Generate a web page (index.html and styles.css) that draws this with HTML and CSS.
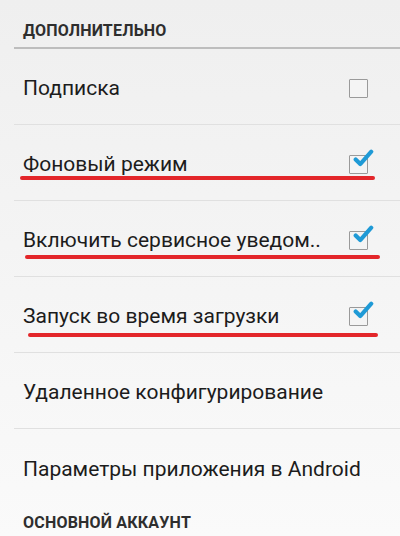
FILE: index.html
```html
<!DOCTYPE html>
<html lang="ru">
<head>
    <meta charset="UTF-8">
    <meta name="viewport" content="width=device-width, initial-scale=1.0">
    <title>Настройки</title>
    <link rel="stylesheet" href="styles.css">
</head>
<body>
    <div class="settings">
        <!-- Категория -->
        <div class="category first">ДОПОЛНИТЕЛЬНО</div>

        <div class="row">
            <span class="title">Подписка</span>
            <span class="check"></span>
        </div>

        <div class="row">
            <span class="title">Фоновый режим</span>
            <span class="check on">
                <svg viewBox="0 0 24 24"><path d="M4 12.5 L9 17.5 L21 4"/></svg>
            </span>
            <span class="mark mark-1"></span>
        </div>

        <div class="row">
            <span class="title">Включить сервисное уведом..</span>
            <span class="check on">
                <svg viewBox="0 0 24 24"><path d="M4 12.5 L9 17.5 L21 4"/></svg>
            </span>
            <span class="mark mark-2"></span>
        </div>

        <div class="row">
            <span class="title">Запуск во время загрузки</span>
            <span class="check on">
                <svg viewBox="0 0 24 24"><path d="M4 12.5 L9 17.5 L21 4"/></svg>
            </span>
            <span class="mark mark-3"></span>
        </div>

        <div class="row">
            <span class="title">Удаленное конфигурирование</span>
        </div>

        <div class="row last">
            <span class="title">Параметры приложения в Android</span>
        </div>

        <div class="category">ОСНОВНОЙ АККАУНТ</div>
    </div>
</body>
</html>
```

FILE: styles.css
```css
body {
    margin: 0;
    font-family: Roboto, "Noto Sans", sans-serif;
    background: linear-gradient(#efefef, #fafafa);
    min-height: 536px;
    overflow: hidden;
}
.settings {
    padding-left: 14px;
}
.category {
    padding: 9px 0 0 9px;
    font-size: 16px;
    font-weight: bold;
    line-height: 18px;
    letter-spacing: 0.2px;
    color: #2e2e2e;
}
.category.first {
    padding-top: 22px;
    padding-bottom: 7px;
    border-bottom: 2px solid #bdbdbd;
}
.row {
    position: relative;
    box-sizing: border-box;
    display: flex;
    align-items: center;
    justify-content: space-between;
    height: 76px;
    padding: 3px 32px 0 9px;
    border-bottom: 1px solid #e0e0e0;
}
.row.last {
    border-bottom: none;
}
.title {
    font-size: 21px;
    color: #1c1c1c;
}
.check {
    position: relative;
    width: 17px;
    height: 17px;
    border: 1.5px solid #9a9a9a;
    border-radius: 1px;
    background: #f4f4f4;
}
.check svg {
    position: absolute;
    left: 2px;
    top: -8px;
    width: 22px;
    height: 22px;
    fill: none;
    stroke: #1f9ad6;
    stroke-width: 4.5;
    stroke-linecap: round;
    stroke-linejoin: round;
}
/* красные подчеркивания поверх строки */
.mark {
    position: absolute;
    height: 3.5px;
    border-radius: 2px;
    background: #e3262a;
}
.mark-1 {
    left: 6px;
    width: 355px;
    top: 51px;
}
.mark-2 {
    left: 11px;
    width: 355px;
    top: 54px;
}
.mark-3 {
    left: 14px;
    width: 350px;
    top: 56px;
}
```
